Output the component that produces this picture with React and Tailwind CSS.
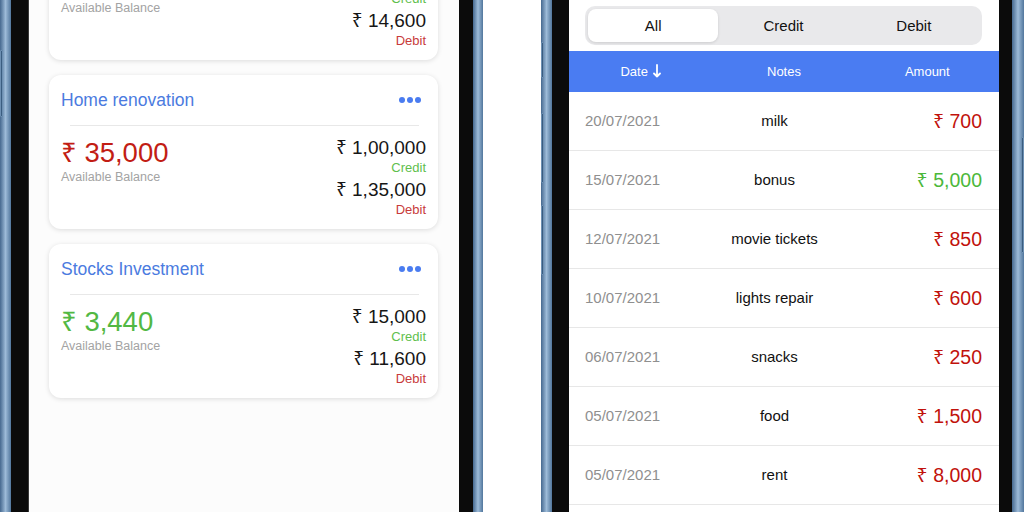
import React from 'react';

const accounts = [
  { title: 'Monthly Budget', balance: '5,400', positive: true, credit: '20,000', debit: '14,600' },
  { title: 'Home renovation', balance: '35,000', positive: false, credit: '1,00,000', debit: '1,35,000' },
  { title: 'Stocks Investment', balance: '3,440', positive: true, credit: '15,000', debit: '11,600' },
];

const transactions = [
  { date: '20/07/2021', note: 'milk', amount: '700', credit: false },
  { date: '15/07/2021', note: 'bonus', amount: '5,000', credit: true },
  { date: '12/07/2021', note: 'movie tickets', amount: '850', credit: false },
  { date: '10/07/2021', note: 'lights repair', amount: '600', credit: false },
  { date: '06/07/2021', note: 'snacks', amount: '250', credit: false },
  { date: '05/07/2021', note: 'food', amount: '1,500', credit: false },
  { date: '05/07/2021', note: 'rent', amount: '8,000', credit: false },
  { date: '01/07/2021', note: 'salary', amount: '40,000', credit: true },
];

// steel-blue phone edge, buttons drawn as darker marks on it
const Edge = ({ width, buttons = [], side = 'left' }) => (
  <div className={`relative shrink-0 h-full ${width} bg-gradient-to-r from-[#46698f] via-[#9dbbd8] to-[#52779d]`}>
    {buttons.map((b, i) => (
      <div
        key={i}
        className={`absolute w-[3px] rounded-[1px] bg-[#3b5d80] border border-[#6d90b3] ${side === 'left' ? 'left-0' : 'right-0'}`}
        style={{ top: b[0], height: b[1] - b[0] }}
      />
    ))}
  </div>
);

const Dots = () => (
  <div className="flex gap-[2px] mr-[5px]">
    <span className="w-[6px] h-[6px] rounded-full bg-[#4a7cf0]" />
    <span className="w-[6px] h-[6px] rounded-full bg-[#4a7cf0]" />
    <span className="w-[6px] h-[6px] rounded-full bg-[#4a7cf0]" />
  </div>
);

const AccountCard = ({ title, balance, positive, credit, debit }) => (
  <div className="bg-white rounded-[12px] shadow-[0_1px_5px_rgba(0,0,0,0.13)] pt-[14px] pb-[11px] px-[12px]">
    <div className="flex items-center justify-between h-[22px]">
      <span className="text-[17.5px] text-[#4b7be0]">{title}</span>
      <Dots />
    </div>
    <div className="mt-[14px] ml-[9px] mr-[7px] h-px bg-[#e8e8e8]" />
    <div className="flex justify-between items-start">
      <div className="mt-[11px]">
        <div className={`text-[27.5px] leading-[32px] ${positive ? 'text-[#52b843]' : 'text-[#c21d14]'}`}>₹ {balance}</div>
        <div className="text-[12.5px] leading-[16px] text-[#a3a3a3]">Available Balance</div>
      </div>
      <div className="mt-[10px] text-right">
        <div className="text-[19px] leading-[24px] text-[#161616]">₹ {credit}</div>
        <div className="text-[13px] leading-[16px] text-[#5fc04d]">Credit</div>
        <div className="mt-[2px] text-[19px] leading-[24px] text-[#161616]">₹ {debit}</div>
        <div className="text-[13px] leading-[16px] text-[#c83b3b]">Debit</div>
      </div>
    </div>
  </div>
);

const SortArrow = () => (
  <svg width="8" height="14" viewBox="0 0 8 14" className="inline-block ml-[5px] -mt-[2px]">
    <path d="M4 1v11.5M1 9.5l3 3 3-3" fill="none" stroke="white" strokeWidth="1.8" strokeLinecap="round" strokeLinejoin="round" />
  </svg>
);

export default function App() {
  return (
    <div className="w-[1024px] h-[512px] overflow-hidden bg-white flex font-['Liberation_Sans','Noto_Sans','DejaVu_Sans',sans-serif]">
      {/* left phone: accounts */}
      <div className="flex h-full shrink-0">
        <Edge width="w-[11px]" buttons={[[50, 117]]} />
        <div className="w-[17px] bg-[#0b0b0b]" />
        <div className="w-px bg-[#3a3a3a]" />
        <div className="w-[430px] bg-[#fcfcfc] overflow-hidden">
          <div className="flex flex-col gap-[15px] px-[20px] pr-[21px] -mt-[94px]">
            {accounts.map((a) => (
              <AccountCard key={a.title} {...a} />
            ))}
          </div>
        </div>
        <div className="w-[14px] bg-[#0b0b0b]" />
        <Edge width="w-[10px]" />
      </div>

      <div className="w-[58px] shrink-0" />

      {/* right phone: transactions */}
      <div className="flex h-full shrink-0">
        <Edge width="w-[11px]" buttons={[[42, 78], [113, 183], [205, 275]]} />
        <div className="w-[17px] bg-[#0b0b0b]" />
        <div className="w-[430px] bg-white overflow-hidden flex flex-col">
          <div className="shrink-0 mt-[6px] ml-[16px] mr-[17px] h-[39px] rounded-[10px] bg-[#e9e9eb] p-[3px] grid grid-cols-3 text-[15px] text-[#111]">
            <div className="rounded-[8px] bg-white shadow-[0_1px_3px_rgba(0,0,0,0.12)] flex items-center justify-center pt-[2px]">All</div>
            <div className="flex items-center justify-center pt-[2px]">Credit</div>
            <div className="flex items-center justify-center pt-[2px]">Debit</div>
          </div>
          <div className="mt-[6px] h-[41px] shrink-0 bg-[#4a7cf2] grid grid-cols-3 items-center text-center text-white text-[13px]">
            <div className="flex items-center justify-center">
              Date
              <SortArrow />
            </div>
            <div>Notes</div>
            <div>Amount</div>
          </div>
          {transactions.map((t, i) => (
            <div
              key={i}
              className="h-[59px] shrink-0 border-b border-[#e7e7e7] grid grid-cols-[120px_1fr_138px] items-center pl-[16px] pr-[17px]"
            >
              <div className="text-[15px] text-[#8f8f8f]">{t.date}</div>
              <div className="text-[15px] text-[#111] text-center">{t.note}</div>
              <div className={`text-[19.5px] text-right pt-[2px] ${t.credit ? 'text-[#4cb83a]' : 'text-[#c1120c]'}`}>₹ {t.amount}</div>
            </div>
          ))}
        </div>
        <div className="w-[13px] bg-[#0b0b0b]" />
        <Edge width="w-[12px]" buttons={[[137, 253]]} side="right" />
      </div>
    </div>
  );
}
